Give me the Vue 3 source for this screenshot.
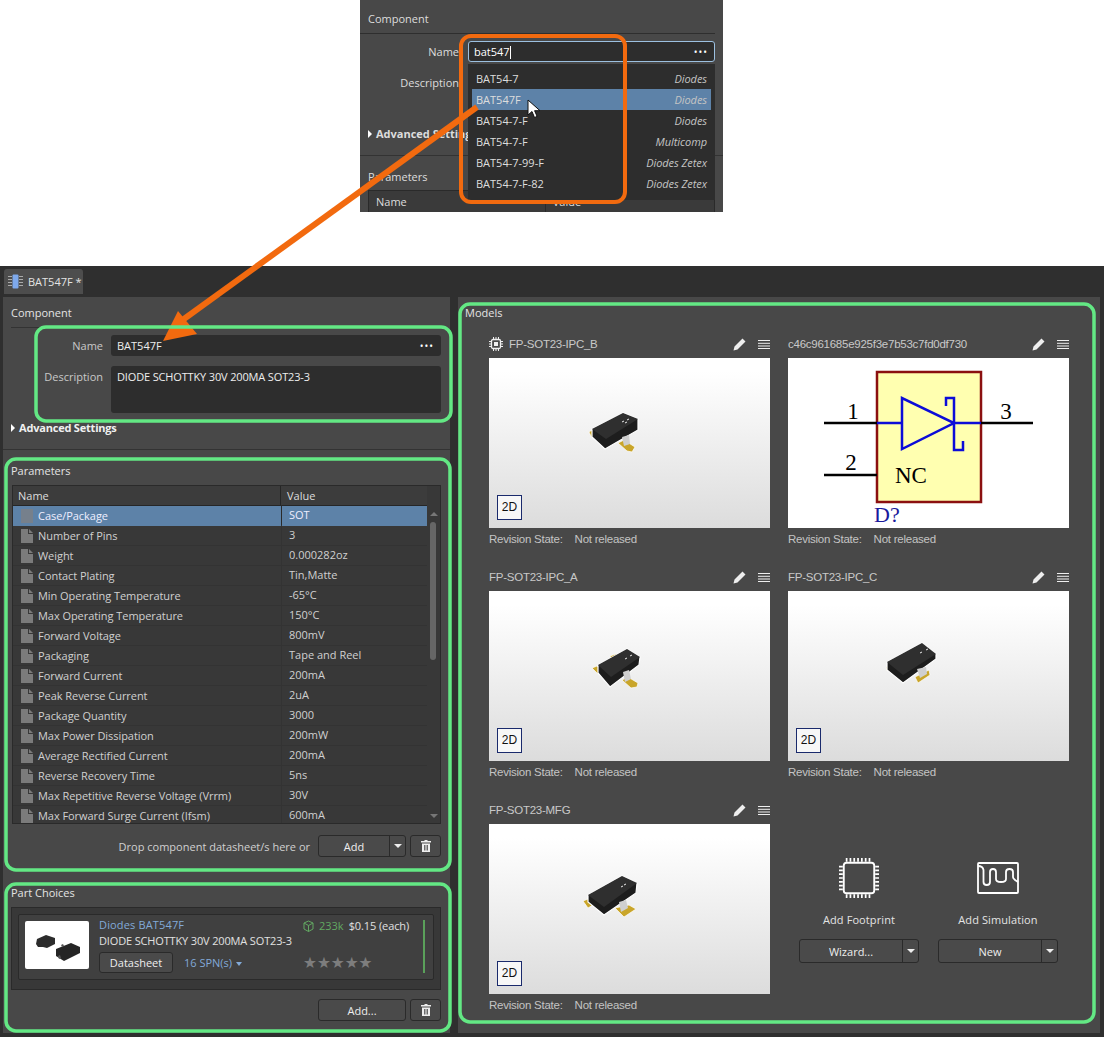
<template>
  <div class="page">
    <!-- small crop showing the name search dropdown -->
    <div class="inset">
      <div class="inset-head">Component</div>
      <div class="inset-form">
        <label class="inset-label">Name</label>
        <div class="inset-input">
          <span>bat547<i class="caret"></i></span>
          <span class="dots">•••</span>
        </div>
      </div>
      <div class="inset-label desc-label">Description</div>
      <div class="inset-adv"><i class="tri"></i>Advanced Settings</div>
      <div class="inset-rule"></div>
      <div class="inset-params">Parameters</div>
      <div class="inset-table"><span>Name</span><span class="val">Value</span></div>
      <ul class="suggest">
        <li v-for="(s, i) in suggestions" :key="i" :class="{ hot: i === 1 }">
          <span>{{ s.part }}</span><em>{{ s.maker }}</em>
        </li>
      </ul>
      <svg class="cursor" width="14" height="20" viewBox="0 0 14 20">
        <path d="M1 1v15l4-3.500 2.500 6 2.600-1.100-2.500-5.700H13z" fill="#fff" stroke="#111" stroke-width="1" />
      </svg>
    </div>

    <div class="app">
      <div class="tabbar">
        <div class="tab">
          <svg width="15" height="15" viewBox="0 0 15 15">
            <rect x="4.500" y="0.500" width="6" height="14" rx="1" fill="#7ea9ec" />
            <path d="M0 2.500h4M0 5.500h4M0 8.500h4M0 11.500h4M11 2.500h4M11 5.500h4M11 8.500h4M11 11.500h4" stroke="#aaa" stroke-width="1" />
          </svg>
          BAT547F *
        </div>
      </div>

      <div class="panels">
        <div class="left">
          <section class="component">
            <h3 class="head">Component</h3>
            <div class="head-rule"></div>
            <div class="field">
              <label>Name</label>
              <div class="input name-input"><span>BAT547F</span><span class="dots">•••</span></div>
            </div>
            <div class="field">
              <label>Description</label>
              <div class="input desc-input">DIODE SCHOTTKY 30V 200MA SOT23-3</div>
            </div>
            <div class="advanced"><i class="tri"></i>Advanced Settings</div>
          </section>

          <section class="parameters">
            <h3 class="head">Parameters</h3>
            <div class="table">
              <div class="thead">
                <span class="col-name">Name</span>
                <span class="col-value">Value</span>
              </div>
              <div class="tbody">
                <div class="rows">
                  <div v-for="(p, i) in params" :key="p[0]" class="row" :class="{ selected: i === 0 }">
                    <span class="col-name">
                      <svg class="doc" width="12" height="14" viewBox="0 0 12 14">
                        <path v-if="i === 0" d="M0 0h12v14H0z" fill="#76808c" />
                        <path v-else d="M0 0h7v5h5v9H0zM8 0l4 4H8z" fill="#7b7b7b" />
                      </svg>
                      {{ p[0] }}
                    </span>
                    <span class="col-value">{{ p[1] }}</span>
                  </div>
                </div>
                <div class="scroll">
                  <i class="up"></i>
                  <i class="thumb"></i>
                  <i class="down"></i>
                </div>
              </div>
            </div>
            <div class="actions">
              <span class="drop">Drop component datasheet/s here or</span>
              <div class="btn split add"><span>Add</span><i class="sep"></i><i class="arrow"></i></div>
              <div class="btn trash">
                <svg width="10" height="12" viewBox="0 0 10 12"><path d="M3.500 0h3v1H10v1.500H0V1h3.500zM1 3.500h8V12H1zM3 5v5.500h.8V5zM4.600 5v5.500h.8V5zM6.200 5v5.500H7V5z" fill="#eee" fill-rule="evenodd" /></svg>
              </div>
            </div>
          </section>

          <section class="choices">
            <h3 class="head">Part Choices</h3>
            <div class="choice-list">
              <div class="choice">
                <div class="thumb-img">
                  <svg width="64" height="48" viewBox="0 0 64 48">
                    <path d="M12 18l9-4 9 3 0 6-8 4-4-1-5 0-2-3z" fill="#2c2c2c" />
                    <path d="M31 28l15-6 9 4v6l-16 8-8-5z" fill="#252525" />
                    <path d="M36 24l2-1 1 2-2 1zM33 35l2-1 1 3-2 1z" fill="#555" />
                  </svg>
                </div>
                <div class="choice-info">
                  <a class="part-link">Diodes BAT547F</a>
                  <div class="part-desc">DIODE SCHOTTKY 30V 200MA SOT23-3</div>
                  <div class="part-links">
                    <div class="btn datasheet">Datasheet</div>
                    <a class="spn">16 SPN(s)<i class="spn-arrow"></i></a>
                  </div>
                </div>
                <div class="choice-stock">
                  <div class="stock-line">
                    <svg width="11" height="12" viewBox="0 0 11 12" fill="none" stroke="#62a862"><path d="M5.500 1L10 3v6l-4.500 2.500L1 9V3zM1 3l4.500 2.500V11.500M5.500 5.500L10 3" /></svg>
                    <span class="qty">233k</span>
                    <span class="price">$0.15 (each)</span>
                  </div>
                  <div class="stars">★★★★★</div>
                </div>
                <i class="stock-bar"></i>
              </div>
            </div>
            <div class="actions">
              <div class="btn add-plain">Add...</div>
              <div class="btn trash">
                <svg width="10" height="12" viewBox="0 0 10 12"><path d="M3.500 0h3v1H10v1.500H0V1h3.500zM1 3.500h8V12H1zM3 5v5.500h.8V5zM4.600 5v5.500h.8V5zM6.200 5v5.500H7V5z" fill="#eee" fill-rule="evenodd" /></svg>
              </div>
            </div>
          </section>
        </div>

        <section class="models">
          <h3 class="head">Models</h3>
          <div class="model-grid">
            <div v-for="m in models" :key="m.name" class="model">
              <div class="model-title">
                <svg v-if="m.chipIcon" class="small-chip" width="14" height="14" viewBox="0 0 14 14" fill="none" stroke="#eee">
                  <rect x="2.500" y="2.500" width="9" height="9" rx="1.500" stroke-width="1.300" />
                  <rect x="5" y="5" width="4" height="4" fill="#eee" stroke="none" />
                  <path d="M4.500 0v2M7 0v2M9.500 0v2M4.500 12v2M7 12v2M9.500 12v2M0 4.500h2M0 7h2M0 9.500h2M12 4.500h2M12 7h2M12 9.500h2" />
                </svg>
                <span class="model-name">{{ m.name }}</span>
                <svg class="pencil" width="13" height="13" viewBox="0 0 13 13"><path d="M9.500 .5l3 3-8 8L.5 12.500l1-4zM1 12l.7-2.500 1.800 1.800z" fill="#eee" /></svg>
                <svg class="menu" width="12" height="9" viewBox="0 0 12 9"><path d="M0 .5h12M0 3.300h12M0 6h12M0 8.500h12" stroke="#eee" stroke-width="1" /></svg>
              </div>

              <div class="model-view" :class="{ flat: m.schematic }">
                <svg v-if="m.schematic" width="281" height="170" viewBox="0 0 281 170">
                  <rect x="89" y="14" width="104" height="130" fill="#ffffb0" stroke="#8b1010" stroke-width="2.500" />
                  <path d="M36 65h53M193 65h52M36 117h53" stroke="#000" stroke-width="2.500" fill="none" />
                  <path d="M89 65h25M166 65h27M114 40v51l52-26zM158 48v-8h8v52h9v-9" stroke="#0c0cd8" stroke-width="2.500" fill="none" />
                  <text x="65" y="61" class="sch">1</text>
                  <text x="63" y="112" class="sch">2</text>
                  <text x="218" y="61" class="sch">3</text>
                  <text x="107" y="125" class="sch nc">NC</text>
                  <text x="86" y="164" class="sch ref">D?</text>
                </svg>
                <template v-else>
                  <svg width="281" height="170" viewBox="0 0 281 170">
                    <g :transform="`translate(${m.x} ${m.y})`">
                      <path :d="m.pads" fill="#c9a52a" stroke="#fff" stroke-width="0.700" />
                      <polygon :points="m.body" fill="#1d1d1d" stroke="#fff" stroke-width="1.200" />
                      <polygon :points="m.top" fill="#2f2f2f" />
                      <path :d="m.lead" fill="#cfcfcf" />
                      <path :d="m.dots" stroke="#eee" stroke-width="1" />
                    </g>
                  </svg>
                  <div class="flat-btn">2D</div>
                </template>
              </div>

              <div class="revision"><span>Revision State:</span><span>Not released</span></div>
            </div>

            <div class="add-models">
              <div class="add-col">
                <svg width="40" height="40" viewBox="0 0 42 42" fill="none" stroke="#fff">
                  <rect x="5" y="5" width="32" height="32" rx="3" stroke-width="2" />
                  <path d="M8 0v4M12 0v4M16 0v4M20 0v4M24 0v4M28 0v4M32 0v4M8 38v4M12 38v4M16 38v4M20 38v4M24 38v4M28 38v4M32 38v4M0 9h4M0 13h4M0 17h4M0 21h4M0 25h4M0 29h4M0 33h4M38 9h4M38 13h4M38 17h4M38 21h4M38 25h4M38 29h4M38 33h4" stroke-width="1.800" />
                </svg>
                <span class="add-label">Add Footprint</span>
                <div class="btn split wide"><span>Wizard...</span><i class="sep"></i><i class="arrow"></i></div>
              </div>
              <div class="add-col">
                <svg width="42" height="40" viewBox="0 0 42 32" fill="none" stroke="#fff" stroke-width="1.800">
                  <rect x="1" y="1" width="40" height="30" rx="1" />
                  <path d="M1 4c3 0 5 1 5.500 4v12c0 4 6.500 4 6.500 0V10c0-4 6-4 6 0v7c0 4 10 4 10 0v-7c0-4 7-4 7 0v5c0 2 2 3 5 5" />
                </svg>
                <span class="add-label">Add Simulation</span>
                <div class="btn split wide"><span>New</span><i class="sep"></i><i class="arrow"></i></div>
              </div>
            </div>
          </div>
        </section>
      </div>
    </div>

    <!-- callouts drawn on top of the screenshot -->
    <svg class="notes" width="1104" height="1037" viewBox="0 0 1104 1037" fill="none">
      <rect x="461" y="36" width="164" height="166" rx="10" stroke="#f26a0f" stroke-width="4" />
      <path d="M477 107L177 324" stroke="#f26a0f" stroke-width="6" />
      <path d="M163 341l15-30 19 23z" fill="#f26a0f" />
      <g stroke="#63e884" stroke-width="3.500">
        <rect x="36" y="327" width="415" height="94" rx="10" />
        <rect x="6" y="459" width="444" height="411" rx="10" />
        <rect x="6" y="884" width="444" height="147" rx="10" />
        <rect x="460" y="304" width="634" height="718" rx="10" />
      </g>
    </svg>
  </div>
</template>

<script setup>
const suggestions = [
  { part: 'BAT54-7', maker: 'Diodes' },
  { part: 'BAT547F', maker: 'Diodes' },
  { part: 'BAT54-7-F', maker: 'Diodes' },
  { part: 'BAT54-7-F', maker: 'Multicomp' },
  { part: 'BAT54-7-99-F', maker: 'Diodes Zetex' },
  { part: 'BAT54-7-F-82', maker: 'Diodes Zetex' }
]

const params = [
  ['Case/Package', 'SOT'],
  ['Number of Pins', '3'],
  ['Weight', '0.000282oz'],
  ['Contact Plating', 'Tin,Matte'],
  ['Min Operating Temperature', '-65°C'],
  ['Max Operating Temperature', '150°C'],
  ['Forward Voltage', '800mV'],
  ['Packaging', 'Tape and Reel'],
  ['Forward Current', '200mA'],
  ['Peak Reverse Current', '2uA'],
  ['Package Quantity', '3000'],
  ['Max Power Dissipation', '200mW'],
  ['Average Rectified Current', '200mA'],
  ['Reverse Recovery Time', '5ns'],
  ['Max Repetitive Reverse Voltage (Vrrm)', '30V'],
  ['Max Forward Surge Current (Ifsm)', '600mA']
]

// x/y place the 3D part inside its 281x170 preview
const models = [
  {
    name: 'FP-SOT23-IPC_B', chipIcon: true, x: 71, y: 32,
    body: '32,39 63,23 78,29 78,40 45,59 32,47',
    top: '32,39 63,23 78,29 46,49',
    pads: 'M29 42l3-2 2 7-2 1zM58 53l6-3 11 7-3 5-5-1z',
    lead: 'M62 47l7-2 1 9-6 2z',
    dots: 'M62 32l2-1M67 30l2-1M65 33l2-1'
  },
  { name: 'c46c961685e925f3e7b53c7fd0df730', schematic: true },
  {
    name: 'FP-SOT23-IPC_A', x: 81, y: 39,
    body: '28,35 57,19 70,27 69,35 40,57 28,43',
    top: '28,35 57,19 70,27 41,47',
    pads: 'M22 38l5-2 6 6-5 2zM40 26l6-2 2 3-6 3zM52 50l6-3 10 6-1 4-6 1z',
    lead: 'M53 42l6-2 2 9-6 3z',
    dots: 'M55 29l2-1M60 26l2-1'
  },
  {
    name: 'FP-SOT23-IPC_C', x: 82, y: 39,
    body: '17,32 52,13 66,24 66,29 33,53 17,40',
    top: '17,32 52,13 66,24 33,45',
    pads: 'M16 37l2-1 1 4-2 1zM45 47l14-7 1 5-12 8z',
    lead: 'M47 39l9-2 1 7-7 4z',
    dots: 'M50 23l2-1M56 20l2-1'
  },
  {
    name: 'FP-SOT23-MFG', x: 76, y: 36,
    body: '23,35 57,16 72,23 71,33 39,55 23,42',
    top: '23,35 57,16 72,23 39,47',
    pads: 'M18 41l5-2 5 6-5 3zM50 48l14-3 7 4-12 8z',
    lead: 'M54 42l7-2 2 8-7 4z',
    dots: 'M56 27l2-1M59 25l2-1'
  }
]
</script>

<style>
html, body { margin: 0; background: #fff; }
</style>

<style scoped>
.page {
  position: relative;
  width: 1104px;
  height: 1037px;
  overflow: hidden;
  background: #fff;
  font-family: "Open Sans", "Noto Sans", sans-serif;
  font-size: 11px;
  color: #ddd;
}

/* inset */
.inset {
  position: relative;
  width: 363px;
  height: 212px;
  margin: 0 0 54px 360px;
  background: #484848;
  overflow: hidden;
}
.inset-head { padding: 11px 8px 7px; height: 15px; line-height: 15px; border-bottom: 1px solid #2e2e2e; margin-right: 8px; }
.inset-form { display: flex; align-items: center; margin-top: 7px; }
.inset-label { width: 99px; text-align: right; }
.inset-input {
  display: flex;
  justify-content: space-between;
  align-items: center;
  box-sizing: border-box;
  width: 247px;
  height: 21px;
  margin-left: 9px;
  padding: 0 6px 0 5px;
  background: #2d2d2d;
  border: 1px solid #9cc0e0;
  border-radius: 3px;
  color: #fff;
}
.caret { display: inline-block; width: 1px; height: 13px; background: #fff; vertical-align: -3px; }
.dots { font-size: 10px; letter-spacing: 1px; color: #fff; }
.desc-label { margin-top: 13px; }
.inset-adv { margin: 36px 0 0 8px; font-weight: 700; }
.inset-rule { height: 1px; margin-top: 14px; background: #333; }
.inset-params { margin: 13px 0 0 8px; }
.inset-table {
  display: flex;
  margin: 6px 8px 0;
  padding-left: 7px;
  height: 21px;
  line-height: 21px;
  background: #3a3a3a;
  border: 1px solid #2a2a2a;
}
.inset-table .val { margin-left: 138px; padding-left: 7px; border-left: 1px solid #2a2a2a; }
.suggest {
  position: absolute;
  left: 108px;
  top: 64px;
  width: 247px;
  height: 136px;
  box-sizing: border-box;
  margin: 0;
  padding: 4px;
  list-style: none;
  background: #2d2d2d;
}
.suggest li {
  display: flex;
  justify-content: space-between;
  align-items: center;
  height: 21px;
  padding: 0 4px;
}
.suggest li.hot { background: #5d82a8; }
.suggest em { color: #c4c4c4; letter-spacing: -0.05px; }
.cursor { position: absolute; left: 167px; top: 99px; }
.tri {
  display: inline-block;
  width: 0;
  height: 0;
  margin-right: 4px;
  border-left: 4px solid #fff;
  border-top: 4px solid transparent;
  border-bottom: 4px solid transparent;
}

/* main window */
.app { height: 771px; background: #2f2f2f; }
.tabbar { height: 31px; box-sizing: border-box; padding: 3px 0 0 4px; }
.tab {
  display: flex;
  align-items: center;
  gap: 5px;
  box-sizing: border-box;
  width: 79px;
  height: 25px;
  padding-left: 4px;
  background: #4d4d4d;
  border-radius: 3px 3px 0 0;
  color: #e4e4e4;
}
.panels { display: flex; padding-left: 3px; height: 736px; gap: 8px; }
.left { width: 447px; background: #484848; }
.head { margin: 0; padding: 8px 0 0 8px; height: 24px; box-sizing: border-box; font-size: 11px; font-weight: 400; line-height: 15px; color: #e4e4e4; }

.component { height: 153px; box-sizing: border-box; border-bottom: 1px solid #333; }
.head-rule { height: 1px; margin: 6px 9px 7px 8px; background: #333; }
.field { display: flex; margin-bottom: 10px; }
.field label { width: 100px; padding-top: 3px; text-align: right; color: #c8c8c8; }
.input {
  box-sizing: border-box;
  width: 330px;
  margin-left: 8px;
  padding: 3px 7px 3px 6px;
  background: #2d2d2d;
  border-radius: 3px;
  color: #eee;
}
.name-input { display: flex; justify-content: space-between; align-items: center; height: 21px; }
.desc-input { height: 47px; letter-spacing: -0.15px; }
.advanced { margin: -3px 0 0 8px; font-weight: 700; color: #f0f0f0; line-height: 15px; letter-spacing: -0.2px; }

.parameters { height: 428px; padding-top: 5px; box-sizing: border-box; }
.table { margin: 6px 9px 0; height: 339px; background: #383838; border: 1px solid #2a2a2a; box-sizing: border-box; overflow: hidden; }
.thead { display: flex; height: 20px; box-sizing: border-box; line-height: 19px; background: #3c3c3c; border-bottom: 1px solid #262626; width: 414px; }
.thead .col-name { border-right: 1px solid #262626; padding-left: 5px; }
.thead .col-value { padding-left: 6px; }
.col-name { width: 268px; box-sizing: border-box; display: flex; align-items: center; gap: 5px; flex-shrink: 0; }
.col-value { width: 145px; box-sizing: border-box; }
.tbody { display: flex; }
.rows { width: 414px; }
.row { display: flex; height: 20px; line-height: 19px; align-items: center; border-bottom: 1px solid #333; box-sizing: border-box; color: #d0d0d0; }
.row .col-name { padding-left: 8px; letter-spacing: -0.05px; }
.row .col-value { padding: 0 0 2px 7px; border-left: 1px solid #333; }
.row.selected { background: #5d82a8; color: #eef; border-bottom-color: transparent; }
.row.selected .col-value { border-left-color: #2a2a2a; }
.scroll { position: relative; flex: 1; }
.scroll i { position: absolute; display: block; }
.up { left: 3px; top: 6px; width: 0; height: 0; border: 4px solid transparent; border-bottom-color: #777; border-top: 0; }
.thumb { left: 3px; top: 16px; width: 6px; height: 138px; background: #666; border-radius: 3px; }
.down { left: 3px; top: 308px; width: 0; height: 0; border: 4px solid transparent; border-top-color: #777; border-bottom: 0; }

.actions { display: flex; justify-content: flex-end; align-items: center; gap: 4px; padding-right: 9px; margin-top: 11px; }
.drop { margin-right: 4px; color: #d0d0d0; }
.btn {
  box-sizing: border-box;
  display: flex;
  align-items: center;
  justify-content: center;
  height: 22px;
  background: #4a4a4a;
  border: 1px solid #2a2a2a;
  border-radius: 3px;
  color: #eee;
}
.trash { width: 31px; }
.split { position: relative; }
.split span { flex: 1; text-align: center; }
.add { width: 88px; }
.add-plain { width: 88px; }
.sep { width: 1px; height: 100%; background: #2a2a2a; }
.arrow { width: 0; height: 0; margin: 0 3.500px; border: 4px solid transparent; border-top-color: #eee; border-bottom: 0; }

.choices { box-sizing: border-box; height: 155px; }
.choices .head { padding-top: 7px; }
.choices .actions { margin-top: 9px; }
.choice-list {
  box-sizing: border-box;
  margin: 5px 9px 0 8px;
  height: 83px;
  padding: 6px;
  background: #383838;
  border: 1px solid #2a2a2a;
}
.choice {
  display: flex;
  box-sizing: border-box;
  height: 66px;
  padding: 6px;
  background: #404040;
  border: 1px solid #2a2a2a;
  border-radius: 2px;
}
.thumb-img { width: 64px; height: 48px; background: #fff; border-radius: 2px; flex-shrink: 0; }
.choice-info { width: 204px; margin: -4px 0 0 10px; flex-shrink: 0; }
.part-link { display: block; height: 16px; color: #82aad8; line-height: 16px; letter-spacing: 0.15px; }
.part-desc { height: 16px; line-height: 16px; white-space: nowrap; color: #e0e0e0; letter-spacing: -0.15px; }
.part-links { display: flex; align-items: center; margin-top: 3px; }
.datasheet { width: 74px; height: 21px; }
.spn { margin-left: 11px; color: #82aad8; }
.spn-arrow { display: inline-block; width: 0; height: 0; margin-left: 4px; border: 3px solid transparent; border-top: 4px solid #82aad8; border-bottom: 0; vertical-align: 1px; }
.choice-stock { width: 114px; margin-top: -3px; flex-shrink: 0; }
.stock-line { display: flex; align-items: center; height: 15px; gap: 5px; }
.qty { color: #62a862; }
.price { margin-left: 0; color: #e0e0e0; letter-spacing: -0.1px; }
.stars { margin-top: 22px; font-size: 15.5px; line-height: 17px; color: #7d7d7d; font-family: "DejaVu Sans", sans-serif; }
.stock-bar { width: 2px; height: 53px; margin: -1px 0 0 6px; background: #5aa05a; flex-shrink: 0; }

.models { width: 642px; background: #484848; }
.models .head { padding-left: 7px; }
.model-grid {
  display: grid;
  grid-template-columns: 281px 281px;
  grid-auto-rows: 214px;
  column-gap: 18px;
  row-gap: 19px;
  padding: 15px 0 0 31px;
}
.model { font-family: "Liberation Sans", Arial, sans-serif; }
.model-title { display: flex; align-items: center; height: 22px; padding-bottom: 6px; box-sizing: border-box; }
.small-chip { margin-right: 6px; }
.model-name { flex: 1; font-size: 11.5px; letter-spacing: -0.25px; color: #c8c8c8; }
.pencil { margin-right: 12px; }
.model-view {
  position: relative;
  width: 281px;
  height: 170px;
  background: linear-gradient(#fff 8%, #dcdcdc);
}
.model-view svg { display: block; }
.model-view.flat { background: #fff; }
.sch { font-family: "Liberation Serif", serif; font-size: 23px; text-anchor: middle; fill: #000; }
.sch.nc { text-anchor: start; }
.sch.ref { text-anchor: start; fill: #1a1a9c; font-size: 22px; }
.flat-btn {
  position: absolute;
  left: 8px;
  bottom: 8px;
  box-sizing: border-box;
  width: 25px;
  height: 25px;
  line-height: 23px;
  text-align: center;
  background: #f7f7f7;
  border: 1px solid #1a2a6c;
  font-size: 12px;
  color: #111;
}
.revision { display: flex; gap: 12px; height: 22px; align-items: center; font-size: 11.5px; letter-spacing: -0.25px; color: #c4c4c4; }

.add-models { display: flex; padding: 56px 0 0 11px; }
.add-col { display: flex; flex-direction: column; align-items: center; width: 120px; }
.add-col + .add-col { margin-left: 19px; }
.add-label { margin: 14px 0 12px; line-height: 15px; color: #e4e4e4; letter-spacing: 0.1px; }
.wide { width: 120px; height: 24px; }

.notes { position: absolute; left: 0; top: 0; pointer-events: none; }
</style>
